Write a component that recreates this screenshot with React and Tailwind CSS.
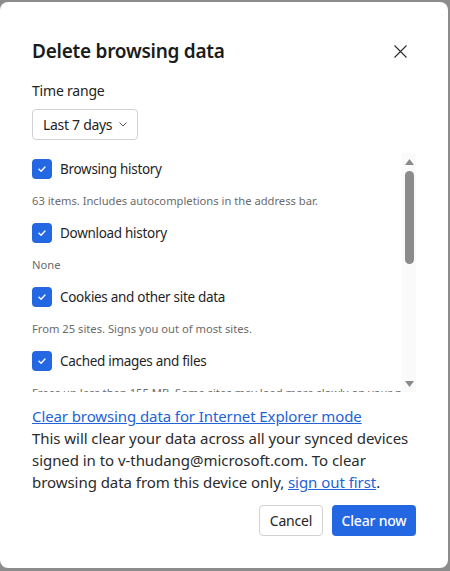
import React from "react";

const items = [
  { label: "Browsing history", desc: "63 items. Includes autocompletions in the address bar." },
  { label: "Download history", desc: "None" },
  { label: "Cookies and other site data", desc: "From 25 sites. Signs you out of most sites." },
  { label: "Cached images and files", desc: "Frees up less than 155 MB. Some sites may load more slowly on your next visit." },
];

const Checkbox = () => (
  <span className="flex h-5 w-5 shrink-0 items-center justify-center rounded-[4px] bg-[#2467e3]">
    <svg width="10" height="10" viewBox="0 0 10 10" fill="none">
      <path d="M2 5.2 L4.1 7.2 L8 3" stroke="white" strokeWidth="1.4" strokeLinecap="round" strokeLinejoin="round" />
    </svg>
  </span>
);

const App = () => {
  return (
    <div
      className="h-[571px] w-[450px] overflow-hidden bg-[#8c8c8c] pt-[2px]"
      style={{ fontFamily: '"Noto Sans", "Open Sans", sans-serif' }}
    >
      <div className="flex h-[566px] w-[448px] flex-col rounded-lg bg-white pl-8 pr-8">
        {/* header */}
        <div className="mt-[35px] flex items-center justify-between">
          <h1 className="text-[19px] font-semibold leading-[28px] tracking-[-0.25px] text-[#1b1b1b]">
            Delete browsing data
          </h1>
          <button className="mr-[6px] flex h-5 w-5 items-center justify-center">
            <svg width="13" height="13" viewBox="0 0 13 13">
              <path d="M0.5 0.5 L12.5 12.5 M12.5 0.5 L0.5 12.5" stroke="#2b2b2b" strokeWidth="1.1" />
            </svg>
          </button>
        </div>

        <div className="mt-[16px] text-[14px] leading-[20px] tracking-[-0.2px] text-[#242424]">Time range</div>
        <div className="mt-[8px] flex">
          <div className="flex h-[31px] items-center gap-[7px] rounded-[4px] border border-[#d1d1d1] pl-[10px] pr-[10px] text-[14px] tracking-[-0.3px] text-[#242424]">
            Last 7 days
            <svg width="8" height="5" viewBox="0 0 8 5">
              <path d="M0.5 0.5 L4 4 L7.5 0.5" stroke="#555" strokeWidth="1" fill="none" />
            </svg>
          </div>
        </div>

        {/* list with scrollbar */}
        <div className="mt-[13px] flex h-[239px]">
          <div className="flex-1 overflow-hidden">
            {items.map((it) => (
              <div key={it.label}>
                <div className="flex h-8 items-center gap-2">
                  <Checkbox />
                  <span className="text-[13.5px] tracking-[-0.3px] text-[#1f1f1f]">{it.label}</span>
                </div>
                <div className="flex h-8 items-center whitespace-nowrap text-[11.2px] text-[#6b6b6b]">
                  {it.desc}
                </div>
              </div>
            ))}
          </div>
          <div className="flex w-[14px] flex-col items-center bg-[#fafafa] pt-[6px]">
            <svg width="9" height="6" viewBox="0 0 9 6">
              <path d="M4.5 0 L9 6 L0 6 Z" fill="#8a8a8a" />
            </svg>
            <div className="mt-[6px] h-[93px] w-[9px] rounded-full bg-[#8b8b8b]" />
            <div className="flex-1" />
            <svg className="mb-[5px]" width="9" height="6" viewBox="0 0 9 6">
              <path d="M0 0 L9 0 L4.5 6 Z" fill="#8a8a8a" />
            </svg>
          </div>
        </div>

        <a href="#" className="mt-[13px] text-[15px] leading-[22px] tracking-[-0.1px] text-[#2463d6] underline">
          Clear browsing data for Internet Explorer mode
        </a>
        <p className="text-[15px] leading-[22px] tracking-[-0.05px] text-[#2b2b2b]">
          This will clear your data across all your synced devices signed in to v-thudang@microsoft.com. To clear
          browsing data from this device only,{" "}
          <a href="#" className="text-[#2463d6] underline">
            sign out first
          </a>
          .
        </p>

        <div className="mt-[12px] flex justify-end gap-[9px]">
          <button className="h-[31px] w-[64px] rounded-[4px] border border-[#d1d1d1] text-[14px] tracking-[-0.2px] text-[#242424]">
            Cancel
          </button>
          <button className="h-[31px] w-[84px] rounded-[4px] bg-[#2467e3] text-[14px] font-medium tracking-[-0.2px] text-white">
            Clear now
          </button>
        </div>
      </div>
    </div>
  );
};

export default App;
